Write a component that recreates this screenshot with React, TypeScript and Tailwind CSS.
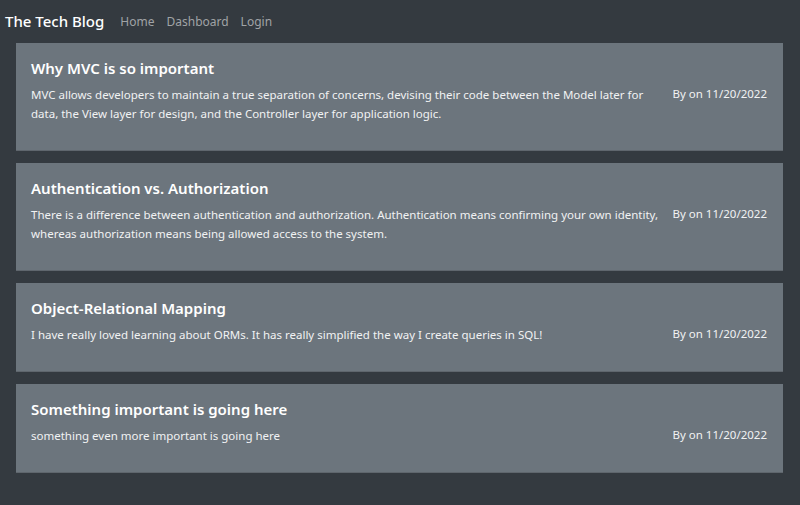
const posts = [
  {
    title: 'Why MVC is so important',
    body: 'MVC allows developers to maintain a true separation of concerns, devising their code between the Model later for data, the View layer for design, and the Controller layer for application logic.',
    date: '11/20/2022',
  },
  {
    title: 'Authentication vs. Authorization',
    body: 'There is a difference between authentication and authorization. Authentication means confirming your own identity, whereas authorization means being allowed access to the system.',
    date: '11/20/2022',
  },
  {
    title: 'Object-Relational Mapping',
    body: 'I have really loved learning about ORMs. It has really simplified the way I create queries in SQL!',
    date: '11/20/2022',
  },
  {
    title: 'Something important is going here',
    body: 'something even more important is going here',
    date: '11/20/2022',
  },
]

function PostCard({ title, body, date }: { title: string; body: string; date: string }) {
  return (
    <div className="flex bg-[#6c757d] border-b border-[#5f666d] pl-[15px] pr-4 pt-[13px] pb-[27px]">
      <div className="flex-1 min-w-0">
        <h4 className="text-[15px] leading-[24px] font-semibold text-white">{title}</h4>
        <p className="mt-[5px] text-[11.5px] leading-[19px] text-[#f1f2f3]">{body}</p>
      </div>
      <div className="shrink-0 ml-3 pt-[28px] whitespace-nowrap text-[11.5px] leading-[19px] text-[#f1f2f3]">
        By on {date}
      </div>
    </div>
  )
}

export default function App() {
  return (
    <div className="min-h-[505px] bg-[#343a40] font-['Noto_Sans',sans-serif]">
      <nav className="flex items-center h-[43px] px-[5px]">
        <a className="text-[15px] font-medium text-white mr-[16px]">The Tech Blog</a>
        <div className="flex gap-[12px] text-[12px] text-[#a0a3a6]">
          <a>Home</a>
          <a>Dashboard</a>
          <a>Login</a>
        </div>
      </nav>
      <div className="flex flex-col gap-[12px] ml-4 mr-[17px]">
        {posts.map((p) => (
          <PostCard key={p.title} {...p} />
        ))}
      </div>
    </div>
  )
}
